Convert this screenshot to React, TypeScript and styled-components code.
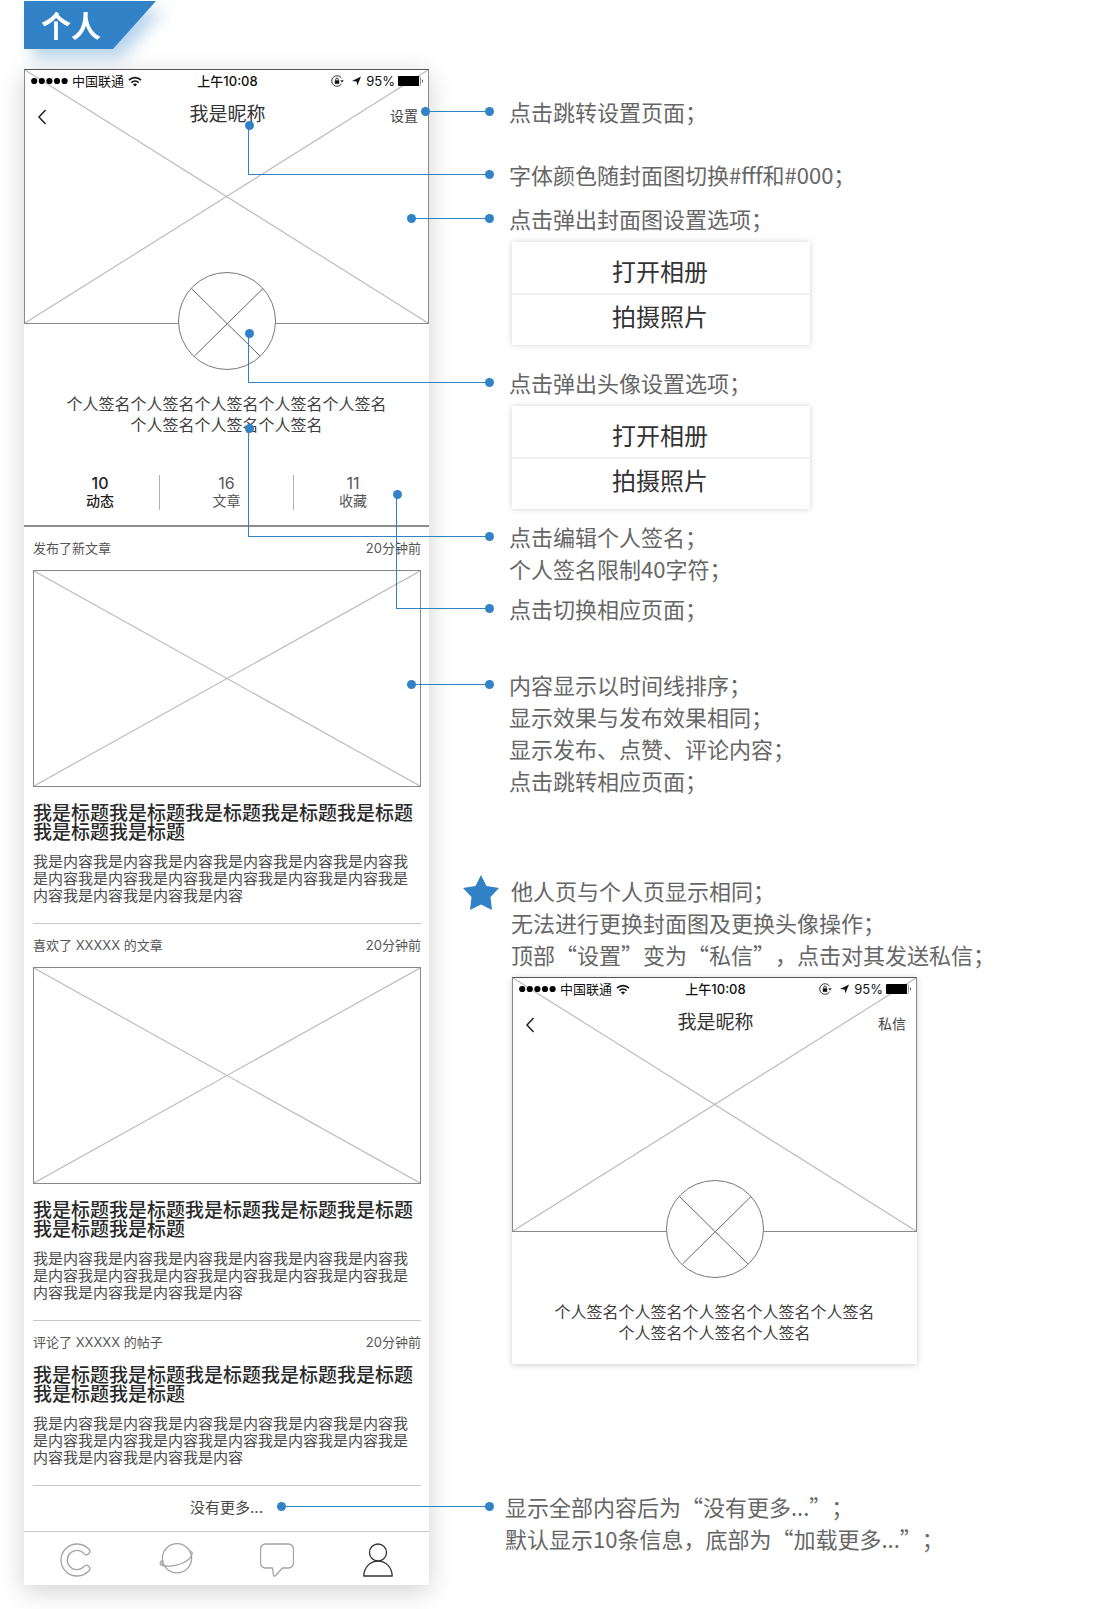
import React from "react";
import styled, { createGlobalStyle } from "styled-components";

const BLUE = "#3182c6";
const CJK = `"Noto Sans CJK SC", "Noto Sans", sans-serif`;
const UI = `Inter, "Noto Sans CJK SC", sans-serif`;

const GlobalStyle = createGlobalStyle`
  *, *::before, *::after { box-sizing: border-box; }
  body { margin: 0; background: #fff; font-family: ${CJK}; color: #333; text-spacing-trim: space-all; }
  h1, h2, p { margin: 0; font-weight: 400; }
  button { border: 0; padding: 0; background: none; color: inherit; font: inherit; cursor: pointer; }
  svg { display: block; }
`;

const Page = styled.main`
  padding: 1px 24px 24px;
`;

const RibbonShadow = styled.header`
  display: flex;
  filter: drop-shadow(8px 9px 8px rgba(49, 130, 198, 0.35));
`;

const Ribbon = styled.h1`
  width: 132px;
  padding-left: 17px;
  background: ${BLUE};
  clip-path: polygon(0 0, 100% 0, 89px 100%, 0 100%);
  color: #fff;
  font-size: 30px;
  font-weight: 700;
  line-height: 46px;
  padding-bottom: 2px;
`;

const Board = styled.div`
  display: flex;
  align-items: flex-start;
  margin-top: 20px;
`;

const Screen = styled.section<{ $soft?: boolean }>`
  flex: none;
  width: 405px;
  background: #fff;
  font-family: ${UI};
  box-shadow: ${(p) => (p.$soft ? "0 1px 6px rgba(0,0,0,.2)" : "0 6px 24px rgba(0,0,0,.18)")};
`;

const Cover = styled.div`
  position: relative;
  height: 255px;
  border: 1px solid #8a8a8a;
  border-top-color: #555;
`;

const CoverCross = styled.svg`
  position: absolute;
  inset: 0;
  width: 100%;
  height: 100%;
`;

const StatusBar = styled.div`
  position: relative;
  display: grid;
  grid-template-columns: 1fr auto 1fr;
  align-items: center;
  height: 22px;
  padding: 0 4px 0 6px;
  color: #111;
  font-size: 13px;
  line-height: 20px;
`;

const StatusSide = styled.div<{ $end?: boolean }>`
  display: flex;
  align-items: center;
  justify-content: ${(p) => (p.$end ? "flex-end" : "flex-start")};
  gap: ${(p) => (p.$end ? 3 : 4)}px;
`;

const Clock = styled.span`
  font-weight: 500;
`;

const NavBar = styled.div`
  position: relative;
  display: grid;
  grid-template-columns: 1fr auto 1fr;
  align-items: end;
  padding: 13px 10px 0 12px;
`;

const NavButton = styled.button<{ $end?: boolean }>`
  justify-self: ${(p) => (p.$end ? "end" : "start")};
  color: #444;
  font-size: 14px;
  line-height: 18px;
`;

const Nickname = styled.h2`
  font-size: 19px;
  line-height: 20px;
`;

const AvatarButton = styled.button`
  position: relative;
  display: block;
  margin: -52px auto 0;
`;

const Signature = styled.p`
  width: 330px;
  margin: 24px auto 0;
  color: #3c3c3c;
  font-size: 16px;
  line-height: 21px;
  text-align: center;
`;

const SoftEnd = styled.div`
  height: 20px;
`;

const Stats = styled.div`
  display: grid;
  grid-template-columns: 1fr 135px 1fr;
  margin-top: 39px;
  padding: 0 17px 15px;
  border-bottom: 2px solid #8c8c8c;
`;

const Stat = styled.button<{ $active?: boolean; $ruled?: boolean }>`
  display: flex;
  flex-direction: column;
  align-items: center;
  border: solid #b0b0b0;
  border-width: ${(p) => (p.$ruled ? "0 1px" : "0")};
  color: ${(p) => (p.$active ? "#222" : "#555")};
  font-size: 14px;
  font-weight: ${(p) => (p.$active ? 500 : 400)};
  line-height: 18px;
`;

const Count = styled.span`
  font-size: 16px;
  line-height: 17px;
`;

const Post = styled.article`
  margin: 0 8px 0 9px;
  padding: 12px 0 19px;
  border-bottom: 1px solid #c6c6c6;
`;

const PostMeta = styled.div`
  display: flex;
  justify-content: space-between;
  margin-bottom: 13px;
  color: #555;
  font-size: 13px;
  line-height: 18px;
`;

const Picture = styled.svg`
  width: 100%;
  height: 217px;
  margin-bottom: 15px;
  border: 1px solid #888;
`;

const PostTitle = styled.h2`
  padding-top: 2px;
  color: #2a2a2a;
  font-size: 19px;
  font-weight: 500;
  line-height: 19px;
`;

const PostText = styled.p`
  margin-top: 11px;
  color: #4a4a4a;
  font-size: 15px;
  line-height: 17px;
`;

const FeedEnd = styled.p`
  padding-bottom: 1px;
  color: #4a4a4a;
  font-size: 15px;
  line-height: 44px;
  text-align: center;
`;

const TabBar = styled.nav`
  display: grid;
  grid-template-columns: repeat(4, 1fr);
  border-top: 1px solid #c6c6c6;
`;

const Tab = styled.button<{ $active?: boolean }>`
  display: flex;
  justify-content: center;
  padding: 11px 0 8px;
  color: ${(p) => (p.$active ? "#333" : "#a3a3a3")};
`;

const Notes = styled.div`
  flex: 1;
  min-width: 0;
  padding: 26px 0 0 76px;
`;

const Note = styled.div<{ $space?: number; $indent?: number }>`
  position: relative;
  margin-top: ${(p) => p.$space ?? 0}px;
  padding-left: ${(p) => p.$indent ?? 4}px;
  color: #666;
  font-size: 22px;
  line-height: 32px;
  white-space: nowrap;
`;

/* A leader line that ends beside the note and reaches back over the screen. */
const Leader = styled.span<{ $reach: number; $rise?: number }>`
  position: absolute;
  right: calc(100% + 16px);
  top: ${(p) => 16 - (p.$rise ?? 0)}px;
  width: ${(p) => p.$reach}px;
  height: ${(p) => (p.$rise ?? 0) + 1}px;
  border: solid ${BLUE};
  border-width: ${(p) => (p.$rise ? "0 0 1px 1px" : "0 0 1px 0")};
  pointer-events: none;

  &::before,
  &::after {
    content: "";
    position: absolute;
    width: 9px;
    height: 9px;
    border-radius: 50%;
    background: ${BLUE};
  }
  &::before {
    left: -4px;
    top: -4px;
  }
  &::after {
    right: -5px;
    bottom: -5px;
  }
`;

const StarIcon = styled.svg`
  position: absolute;
  right: calc(100% + 6px);
  top: 1px;
`;

const Sheet = styled.div`
  width: 298px;
  margin: 8px 0 0 7px;
  padding-bottom: 7px;
  background: #fff;
  box-shadow: 0 0 6px rgba(0, 0, 0, 0.18);
`;

const SheetOption = styled.button`
  display: block;
  width: 100%;
  padding: 8px 2px 2px 0;
  color: #333;
  font-size: 24px;
  line-height: 41px;

  & + & {
    padding-top: 0;
    border-top: 2px solid #f0f0f0;
  }
`;

const Inset = styled.div`
  margin: 7px 0 0 7px;
`;

function Cross() {
  return (
    <>
      <line x1="0" y1="0" x2="100%" y2="100%" stroke="#bdbdbd" strokeWidth="1.2" />
      <line x1="100%" y1="0" x2="0" y2="100%" stroke="#bdbdbd" strokeWidth="1.2" />
    </>
  );
}

function ProfileTop({ action }: { action: string }) {
  return (
    <>
      <Cover>
        <CoverCross aria-hidden="true">
          <Cross />
        </CoverCross>
        <StatusBar>
          <StatusSide>
            <svg width="37" height="8" viewBox="0 0 37 8" fill="#000" aria-hidden="true">
              {[0, 1, 2, 3, 4].map((i) => (
                <circle key={i} cx={3.2 + i * 7.6} cy="4" r="3.1" />
              ))}
            </svg>
            <span>中国联通</span>
            <svg width="14" height="11" viewBox="0 0 14 11" fill="none" stroke="#111" strokeWidth="1.6" aria-hidden="true">
              <path d="M1 4.1a8.6 8.6 0 0 1 12 0M3.4 6.6a5.2 5.2 0 0 1 7.2 0" />
              <path d="M7 10.6 4.9 8.5a3 3 0 0 1 4.2 0z" fill="#111" stroke="none" />
            </svg>
          </StatusSide>
          <Clock>上午10:08</Clock>
          <StatusSide $end>
            <svg width="13" height="12" viewBox="0 0 13 12" fill="none" stroke="#333" aria-hidden="true">
              <path d="M10.4 3A5.3 5.3 0 1 0 10.4 9" />
              <path d="M9.2 5.2h3.6L11 7.8z" fill="#333" stroke="none" />
              <rect x="3.8" y="5.3" width="4.4" height="3.5" fill="#111" stroke="none" />
              <path d="M4.8 5.4V4.2a1.2 1.2 0 0 1 2.4 0v1.2" />
            </svg>
            <svg width="16" height="10" viewBox="0 0 16 10" fill="#111" aria-hidden="true">
              <path d="M14 .5 10.4 9.6 9.6 5.400 5 5z" />
            </svg>
            <span>95%</span>
            <svg width="26" height="10" viewBox="0 0 26 10" aria-hidden="true">
              <rect x=".5" y=".5" width="22" height="9" rx="1" fill="#fff" stroke="#999" />
              <rect x="0" y="0" width="21" height="10" rx="1" fill="#000" />
              <path d="M24 3.2a2.2 2.2 0 0 1 0 3.6z" fill="#333" />
            </svg>
          </StatusSide>
        </StatusBar>
        <NavBar>
          <NavButton aria-label="返回">
            <svg width="10" height="16" viewBox="0 0 10 16" fill="none" stroke="#222" strokeWidth="1.5" aria-hidden="true">
              <path d="M8.5 1 2 8l6.500 7" />
            </svg>
          </NavButton>
          <Nickname>我是昵称</Nickname>
          <NavButton $end>{action}</NavButton>
        </NavBar>
      </Cover>
      <AvatarButton aria-label="头像">
        <svg width="98" height="98" viewBox="0 0 98 98" fill="none" stroke="#666" aria-hidden="true">
          <circle cx="49" cy="49" r="48.500" fill="#fff" stroke="#777" />
          <path d="M13.500 16.500 82 84M85 16.500 16.500 84" />
        </svg>
      </AvatarButton>
      <Signature>{"个人签名".repeat(8)}</Signature>
    </>
  );
}

interface PostData {
  label: string;
  picture: boolean;
}

const posts: PostData[] = [
  { label: "发布了新文章", picture: true },
  { label: "喜欢了 XXXXX 的文章", picture: true },
  { label: "评论了 XXXXX 的帖子", picture: false },
];

function PhotoSheet() {
  return (
    <Sheet>
      <SheetOption>打开相册</SheetOption>
      <SheetOption>拍摄照片</SheetOption>
    </Sheet>
  );
}

const iconProps = {
  width: 34,
  height: 34,
  viewBox: "0 0 34 34",
  fill: "none",
  stroke: "currentColor",
  strokeWidth: 1.3,
  strokeLinejoin: "round" as const,
  "aria-hidden": true,
};

export default function App() {
  return (
    <Page lang="zh-CN">
      <GlobalStyle />
      <RibbonShadow>
        <Ribbon>个人</Ribbon>
      </RibbonShadow>
      <Board>
        <Screen>
          <ProfileTop action="设置" />
          <Stats>
            <Stat $active>
              <Count>10</Count>
              <span>动态</span>
            </Stat>
            <Stat $ruled>
              <Count>16</Count>
              <span>文章</span>
            </Stat>
            <Stat>
              <Count>11</Count>
              <span>收藏</span>
            </Stat>
          </Stats>
          {posts.map((post) => (
            <Post key={post.label}>
              <PostMeta>
                <span>{post.label}</span>
                <span>20分钟前</span>
              </PostMeta>
              {post.picture && (
                <Picture aria-hidden="true">
                  <Cross />
                </Picture>
              )}
              <PostTitle>{"我是标题".repeat(7)}</PostTitle>
              <PostText>{"我是内容".repeat(16)}</PostText>
            </Post>
          ))}
          <FeedEnd>没有更多...</FeedEnd>
          <TabBar>
            <Tab aria-label="首页">
              <svg {...iconProps}>
                <path d="M30.900 6.300A16 16 0 1 0 30.900 27.700A3.200 3.200 0 0 0 26.100 23.400A9.600 9.600 0 1 1 26.100 10.600A3.200 3.200 0 0 0 30.900 6.300Z" />
              </svg>
            </Tab>
            <Tab aria-label="发现">
              <svg {...iconProps}>
                <circle cx="18" cy="15.300" r="14.600" />
                <path d="M4 17C0 19 .2 22 4 22.500C14 24.500 29 20.500 32.500 12.500C33.800 10 33 8.500 31.500 8M4 17.200C2.800 19 3.200 21 4.200 22.500" />
              </svg>
            </Tab>
            <Tab aria-label="消息">
              <svg {...iconProps}>
                <path d="M5.500 1h23a5 5 0 0 1 5 5v14a5 5 0 0 1-5 5H22.500L15.500 32.500Q14 34 13.500 32L12.500 25H5.500a5 5 0 0 1-5-5V6a5 5 0 0 1 5-5Z" />
              </svg>
            </Tab>
            <Tab $active aria-label="我的">
              <svg {...iconProps}>
                <circle cx="17" cy="9.500" r="8.500" />
                <path d="M2.800 33C3 24.500 9 18.200 17 18.200S31 24.500 31.200 33Z" />
              </svg>
            </Tab>
          </TabBar>
        </Screen>

        <Notes>
          <Note>
            点击跳转设置页面；
            <Leader $reach={64} />
          </Note>
          <Note $space={31}>
            字体颜色随封面图切换#fff和#000；
            <Leader $reach={241} $rise={49} />
          </Note>
          <Note $space={12}>
            点击弹出封面图设置选项；
            <Leader $reach={78} />
          </Note>
          <PhotoSheet />
          <Note $space={21}>
            点击弹出头像设置选项；
            <Leader $reach={241} $rise={49} />
          </Note>
          <PhotoSheet />
          <Note $space={11}>
            <p>点击编辑个人签名；</p>
            <p>个人签名限制40字符；</p>
            <Leader $reach={241} $rise={108} />
          </Note>
          <Note $space={8}>
            点击切换相应页面；
            <Leader $reach={93} $rise={114} />
          </Note>
          <Note $space={44}>
            <p>内容显示以时间线排序；</p>
            <p>显示效果与发布效果相同；</p>
            <p>显示发布、点赞、评论内容；</p>
            <p>点击跳转相应页面；</p>
            <Leader $reach={78} />
          </Note>
          <Note $space={78} $indent={6}>
            <StarIcon width="36" height="35" viewBox="0 0 36 35" fill={BLUE} aria-hidden="true">
              <path d="M18 0 23.500 11 36 13 27.500 22 29 35 18 29.500 7 35 8.500 22 0 13 12.500 11Z" />
            </StarIcon>
            <p>他人页与个人页显示相同；</p>
            <p>无法进行更换封面图及更换头像操作；</p>
            <p>顶部“设置”变为“私信”，点击对其发送私信；</p>
          </Note>
          <Inset>
            <Screen $soft>
              <ProfileTop action="私信" />
              <SoftEnd />
            </Screen>
          </Inset>
          <Note $space={126} $indent={0}>
            <p>显示全部内容后为“没有更多...”；</p>
            <p>默认显示10条信息，底部为“加载更多...”；</p>
            <Leader $reach={208} />
          </Note>
        </Notes>
      </Board>
    </Page>
  );
}
